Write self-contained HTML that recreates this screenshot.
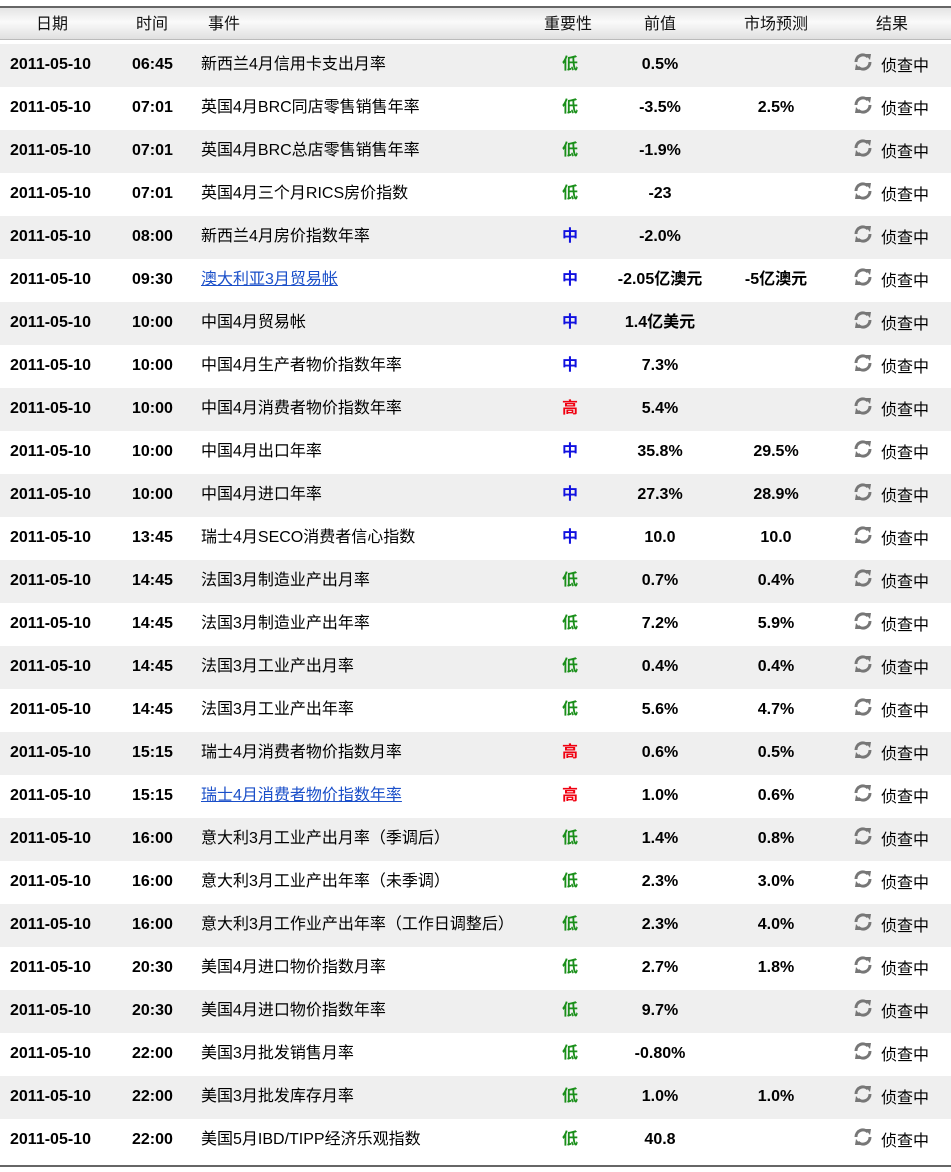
<!DOCTYPE html>
<html><head><meta charset="utf-8"><style>
body{margin:0;background:#fff;width:951px;height:1172px;overflow:hidden;font-family:"Liberation Sans","Noto Sans CJK SC",sans-serif;}
.hdr{position:absolute;top:6px;left:0;width:951px;height:34px;border-top:2px solid #666;box-sizing:border-box;background:linear-gradient(#e4e4e4,#fafafa 45%,#e0e0e0);border-bottom:1px solid #bbb;}
.hdr span{position:absolute;top:2px;font-size:16px;color:#111;}
.row{position:absolute;left:0;width:951px;height:43px;}
.row.g{background:#efefef;}
.row span{position:absolute;top:12px;font-size:16px;color:#000;white-space:nowrap;}
.row span.cj{top:6px}
.c1{left:10px;font-weight:bold}
.c2{left:132px;font-weight:bold}
.c3{left:201px}
.c4{left:560px;width:20px;text-align:center;font-weight:bold}
.c5{left:600px;width:120px;text-align:center;font-weight:bold}
.c6{left:716px;width:120px;text-align:center;font-weight:bold}
.c7{left:881px}
.row .c7{top:8px}
.ic{position:absolute;left:852px;top:8px}
a{color:#1a4fc9;text-decoration:underline}
.row .L{color:#1a8f1a}.row .M{color:#1010e0}.row .H{color:#f00010}
.bot{position:absolute;top:1165px;left:0;width:951px;height:2px;background:#666}
</style></head><body>
<div class="hdr"><span style="left:36px">日期</span><span style="left:136px">时间</span><span style="left:208px">事件</span><span style="left:544px">重要性</span><span style="left:644px">前值</span><span style="left:744px">市场预测</span><span style="left:876px">结果</span></div>
<div id="rows"></div>
<div class="bot"></div>
<script>
var d=[["06:45","新西兰4月信用卡支出月率","L","0.5%",""],
["07:01","英国4月BRC同店零售销售年率","L","-3.5%","2.5%"],
["07:01","英国4月BRC总店零售销售年率","L","-1.9%",""],
["07:01","英国4月三个月RICS房价指数","L","-23",""],
["08:00","新西兰4月房价指数年率","M","-2.0%",""],
["09:30","<a>澳大利亚3月贸易帐</a>","M","-2.05亿澳元","-5亿澳元"],
["10:00","中国4月贸易帐","M","1.4亿美元",""],
["10:00","中国4月生产者物价指数年率","M","7.3%",""],
["10:00","中国4月消费者物价指数年率","H","5.4%",""],
["10:00","中国4月出口年率","M","35.8%","29.5%"],
["10:00","中国4月进口年率","M","27.3%","28.9%"],
["13:45","瑞士4月SECO消费者信心指数","M","10.0","10.0"],
["14:45","法国3月制造业产出月率","L","0.7%","0.4%"],
["14:45","法国3月制造业产出年率","L","7.2%","5.9%"],
["14:45","法国3月工业产出月率","L","0.4%","0.4%"],
["14:45","法国3月工业产出年率","L","5.6%","4.7%"],
["15:15","瑞士4月消费者物价指数月率","H","0.6%","0.5%"],
["15:15","<a>瑞士4月消费者物价指数年率</a>","H","1.0%","0.6%"],
["16:00","意大利3月工业产出月率（季调后）","L","1.4%","0.8%"],
["16:00","意大利3月工业产出年率（未季调）","L","2.3%","3.0%"],
["16:00","意大利3月工作业产出年率（工作日调整后）","L","2.3%","4.0%"],
["20:30","美国4月进口物价指数月率","L","2.7%","1.8%"],
["20:30","美国4月进口物价指数年率","L","9.7%",""],
["22:00","美国3月批发销售月率","L","-0.80%",""],
["22:00","美国3月批发库存月率","L","1.0%","1.0%"],
["22:00","美国5月IBD/TIPP经济乐观指数","L","40.8",""]];
var t={L:"低",M:"中",H:"高"},h="";
function cj(s){return /[^\x00-\x7f]/.test(s)?" cj":"";}
var icon='<svg class="ic" width="22" height="20" viewBox="0 0 22 20"><g fill="none" stroke="#777" stroke-width="3"><path d="M4 10a7 7 0 0 1 12-5"/><path d="M18 10a7 7 0 0 1-12 5"/></g><path d="M13 2l6 0l-1 6z" fill="#777"/><path d="M9 18l-6 0l1-6z" fill="#777"/></svg>';
d.forEach(function(r,i){h+='<div class="row'+(i%2==0?' g':'')+'" style="top:'+(44+i*43)+'px"><span class="c1">2011-05-10</span><span class="c2">'+r[0]+'</span><span class="c3 cj">'+r[1]+'</span><span class="c4 cj '+r[2]+'">'+t[r[2]]+'</span><span class="c5'+cj(r[3])+'">'+r[3]+'</span><span class="c6'+cj(r[4])+'">'+r[4]+'</span>'+icon+'<span class="c7">侦查中</span></div>';});
document.getElementById("rows").innerHTML=h;
</script>
</body></html>
